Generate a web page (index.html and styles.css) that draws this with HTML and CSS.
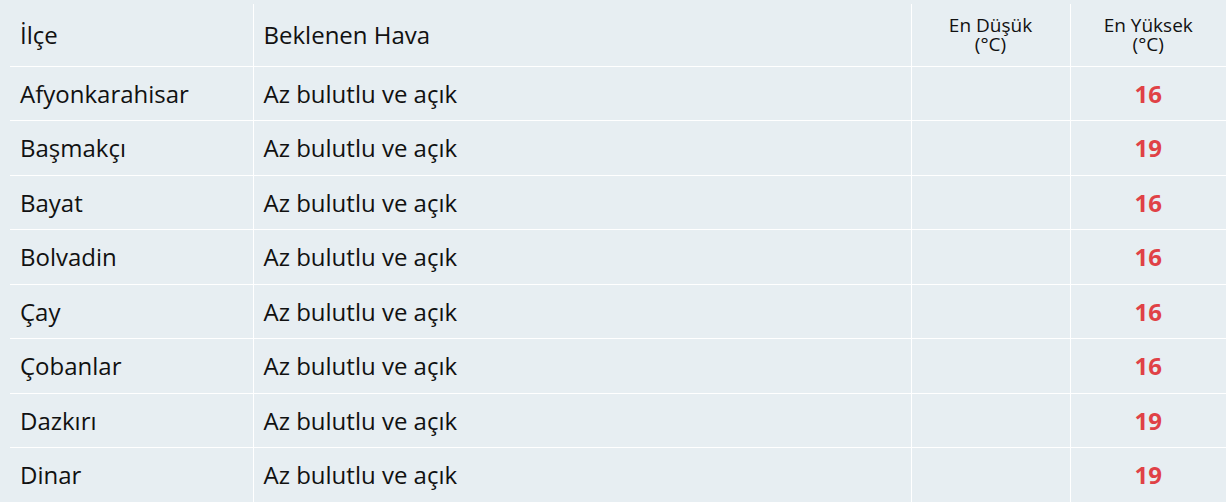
FILE: index.html
```html
<!DOCTYPE html>
<html lang="tr">
<head>
<meta charset="utf-8">
<link rel="stylesheet" href="styles.css">
</head>
<body>
<div class="wrap">
<table class="weather">
  <colgroup>
    <col class="c-ilce"><col class="c-hava"><col class="c-min"><col class="c-max">
  </colgroup>
  <thead>
    <tr>
      <th class="left">İlçe</th>
      <th class="left">Beklenen Hava</th>
      <th class="small">En Düşük<br>(°C)</th>
      <th class="small">En Yüksek<br>(°C)</th>
    </tr>
  </thead>
  <tbody>
    <tr><td>Afyonkarahisar</td><td>Az bulutlu ve açık</td><td></td><td class="hi">16</td></tr>
    <tr><td>Başmakçı</td><td>Az bulutlu ve açık</td><td></td><td class="hi">19</td></tr>
    <tr><td>Bayat</td><td>Az bulutlu ve açık</td><td></td><td class="hi">16</td></tr>
    <tr><td>Bolvadin</td><td>Az bulutlu ve açık</td><td></td><td class="hi">16</td></tr>
    <tr><td>Çay</td><td>Az bulutlu ve açık</td><td></td><td class="hi">16</td></tr>
    <tr><td>Çobanlar</td><td>Az bulutlu ve açık</td><td></td><td class="hi">16</td></tr>
    <tr><td>Dazkırı</td><td>Az bulutlu ve açık</td><td></td><td class="hi">19</td></tr>
    <tr><td>Dinar</td><td>Az bulutlu ve açık</td><td></td><td class="hi">19</td></tr>
  </tbody>
</table>
</div>
</body>
</html>
```
FILE: styles.css
```css
html, body {
  margin: 0;
  padding: 0;
  background: #e7eef2;
}
body {
  font-family: "Open Sans", "Noto Sans", sans-serif;
  color: #111;
  overflow: hidden;
}
.wrap {
  padding: 4px 0 0 10px;
}
.weather {
  border-collapse: collapse;
  table-layout: fixed;
  width: 1216px;
}
.c-ilce { width: 243px; }
.c-hava { width: 658px; }
.c-min { width: 159px; }
.c-max { width: 156px; }
.weather th,
.weather td {
  border-bottom: 1px solid #fff;
  border-left: 1px solid #fff;
  padding: 12px 10px;
  font-size: 24px;
  font-weight: 400;
  line-height: 29.43px;
  vertical-align: middle;
  text-align: left;
}
.weather th:first-child,
.weather td:first-child {
  border-left: none;
}
.weather thead th {
  height: 38px;
}
.weather th.small {
  font-size: 19px;
  line-height: 19px;
  text-align: center;
}
.weather td.hi {
  text-align: center;
  color: #e04146;
  font-weight: 700;
}
```
